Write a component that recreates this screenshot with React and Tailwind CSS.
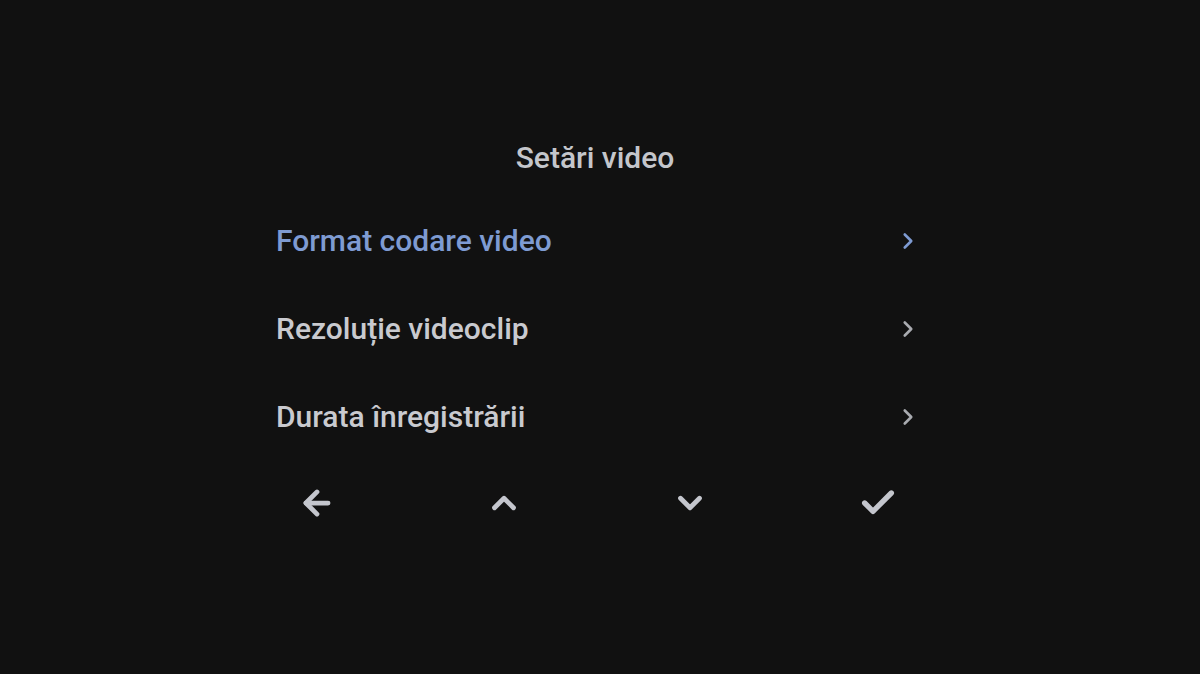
import React from "react";
import { ArrowLeft, ChevronUp, ChevronDown, ChevronRight, Check } from "lucide-react";

const items = [
  { label: "Format codare video", active: true },
  { label: "Rezoluție videoclip", active: false },
  { label: "Durata înregistrării", active: false },
];

export default function App() {
  return (
    <div
      className="w-[1200px] h-[674px] bg-[#111111] flex flex-col items-center overflow-hidden"
      style={{ fontFamily: "Roboto, 'Noto Sans', sans-serif" }}
    >
      <div className="w-[648px] mt-[138px] flex flex-col">
        <div className="text-center text-[30px] font-medium text-[#c4c6cb] leading-[40px] pr-[10px]">
          Setări video
        </div>

        <div className="mt-[42px] flex flex-col gap-[46px]">
          {items.map((item) => (
            <div key={item.label} className="flex items-center justify-between h-[42px]">
              <span
                className={
                  "text-[30px] font-medium leading-[42px] " +
                  (item.active ? "text-[#7e9bd2]" : "text-[#c9cacf]")
                }
              >
                {item.label}
              </span>
              <ChevronRight
                size={26}
                strokeWidth={2.4}
                className={item.active ? "text-[#7e9bd2] mr-[3px]" : "text-[#a9abb0] mr-[3px]"}
              />
            </div>
          ))}
        </div>

        <div className="mt-[45px] flex items-center justify-between pl-[22px] pr-[26px]">
          <ArrowLeft size={38} strokeWidth={3} className="text-[#c4c6cd]" />
          <ChevronUp size={38} strokeWidth={3} className="text-[#c4c6cd]" />
          <ChevronDown size={38} strokeWidth={3} className="text-[#c4c6cd]" />
          <Check size={40} strokeWidth={3.2} className="text-[#c4c6cd]" />
        </div>
      </div>
    </div>
  );
}
